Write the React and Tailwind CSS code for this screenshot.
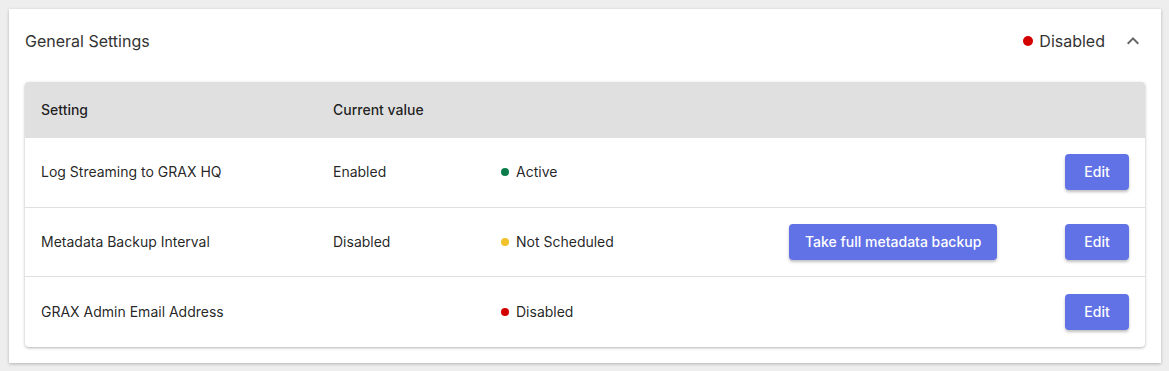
import { useState } from "react";

const rows = [
  { name: "Log Streaming to GRAX HQ", value: "Enabled", status: "Active", dot: "bg-[#0b7d4b]" },
  { name: "Metadata Backup Interval", value: "Disabled", status: "Not Scheduled", dot: "bg-[#f0c32a]", action: "Take full metadata backup" },
  { name: "GRAX Admin Email Address", value: "", status: "Disabled", dot: "bg-[#d40000]" },
];

const Button = ({ children }) => (
  <button className="h-9 min-w-[64px] px-4 rounded-[4px] bg-[#6172e6] text-white text-sm font-medium shadow-[0_2px_3px_rgba(0,0,0,0.25)]">
    {children}
  </button>
);

const App = () => {
  const [open, setOpen] = useState(true);
  return (
    <div className="min-h-[371px] bg-[#eeeeee] pt-[9px] pl-[9px] pr-[8px] pb-[8px] font-['Inter',sans-serif] text-[rgba(0,0,0,0.87)]">
      <div className="bg-white shadow-[0_1px_3px_rgba(0,0,0,0.25)]">
        <div className="h-16 px-4 flex items-center justify-between">
          <h2 className="text-base text-[#333]">General Settings</h2>
          <div className="flex items-center">
            <span className="w-[10px] h-[10px] rounded-full bg-[#d40000] mr-[6px]"></span>
            <span className="text-base text-[#333]">Disabled</span>
            <button className="ml-4 text-[#666]" onClick={() => setOpen(!open)}>
              <svg width="24" height="24" viewBox="0 0 24 24" fill="currentColor" className={open ? "" : "rotate-180"}>
                <path d="M7.41 15.41 12 10.83l4.59 4.58L18 14l-6-6-6 6z" />
              </svg>
            </button>
          </div>
        </div>
        {open && (
          <div className="px-4 pt-[9px] pb-4">
            <div className="rounded-[4px] overflow-hidden shadow-[0_1px_3px_rgba(0,0,0,0.3)] text-sm">
              <div className="grid grid-cols-[292px_168px_288px_276px_1fr] h-14 items-center bg-[#e0e0e0] font-medium">
                <div className="px-4">Setting</div>
                <div className="px-4">Current value</div>
                <div></div>
                <div></div>
                <div></div>
              </div>
              {rows.map((r, i) => (
                <div
                  key={r.name}
                  className={`grid grid-cols-[292px_168px_288px_276px_1fr] items-center h-[69.5px] ${i < rows.length - 1 ? "border-b border-[#e0e0e0]" : ""}`}
                >
                  <div className="px-4">{r.name}</div>
                  <div className="px-4">{r.value}</div>
                  <div className="px-4 flex items-center">
                    <span className={`w-2 h-2 rounded-full ${r.dot} mr-[7px]`}></span>
                    {r.status}
                  </div>
                  <div className="px-4">{r.action && <Button>{r.action}</Button>}</div>
                  <div className="px-4 flex justify-end">
                    <Button>Edit</Button>
                  </div>
                </div>
              ))}
            </div>
          </div>
        )}
      </div>
    </div>
  );
};

export default App;
